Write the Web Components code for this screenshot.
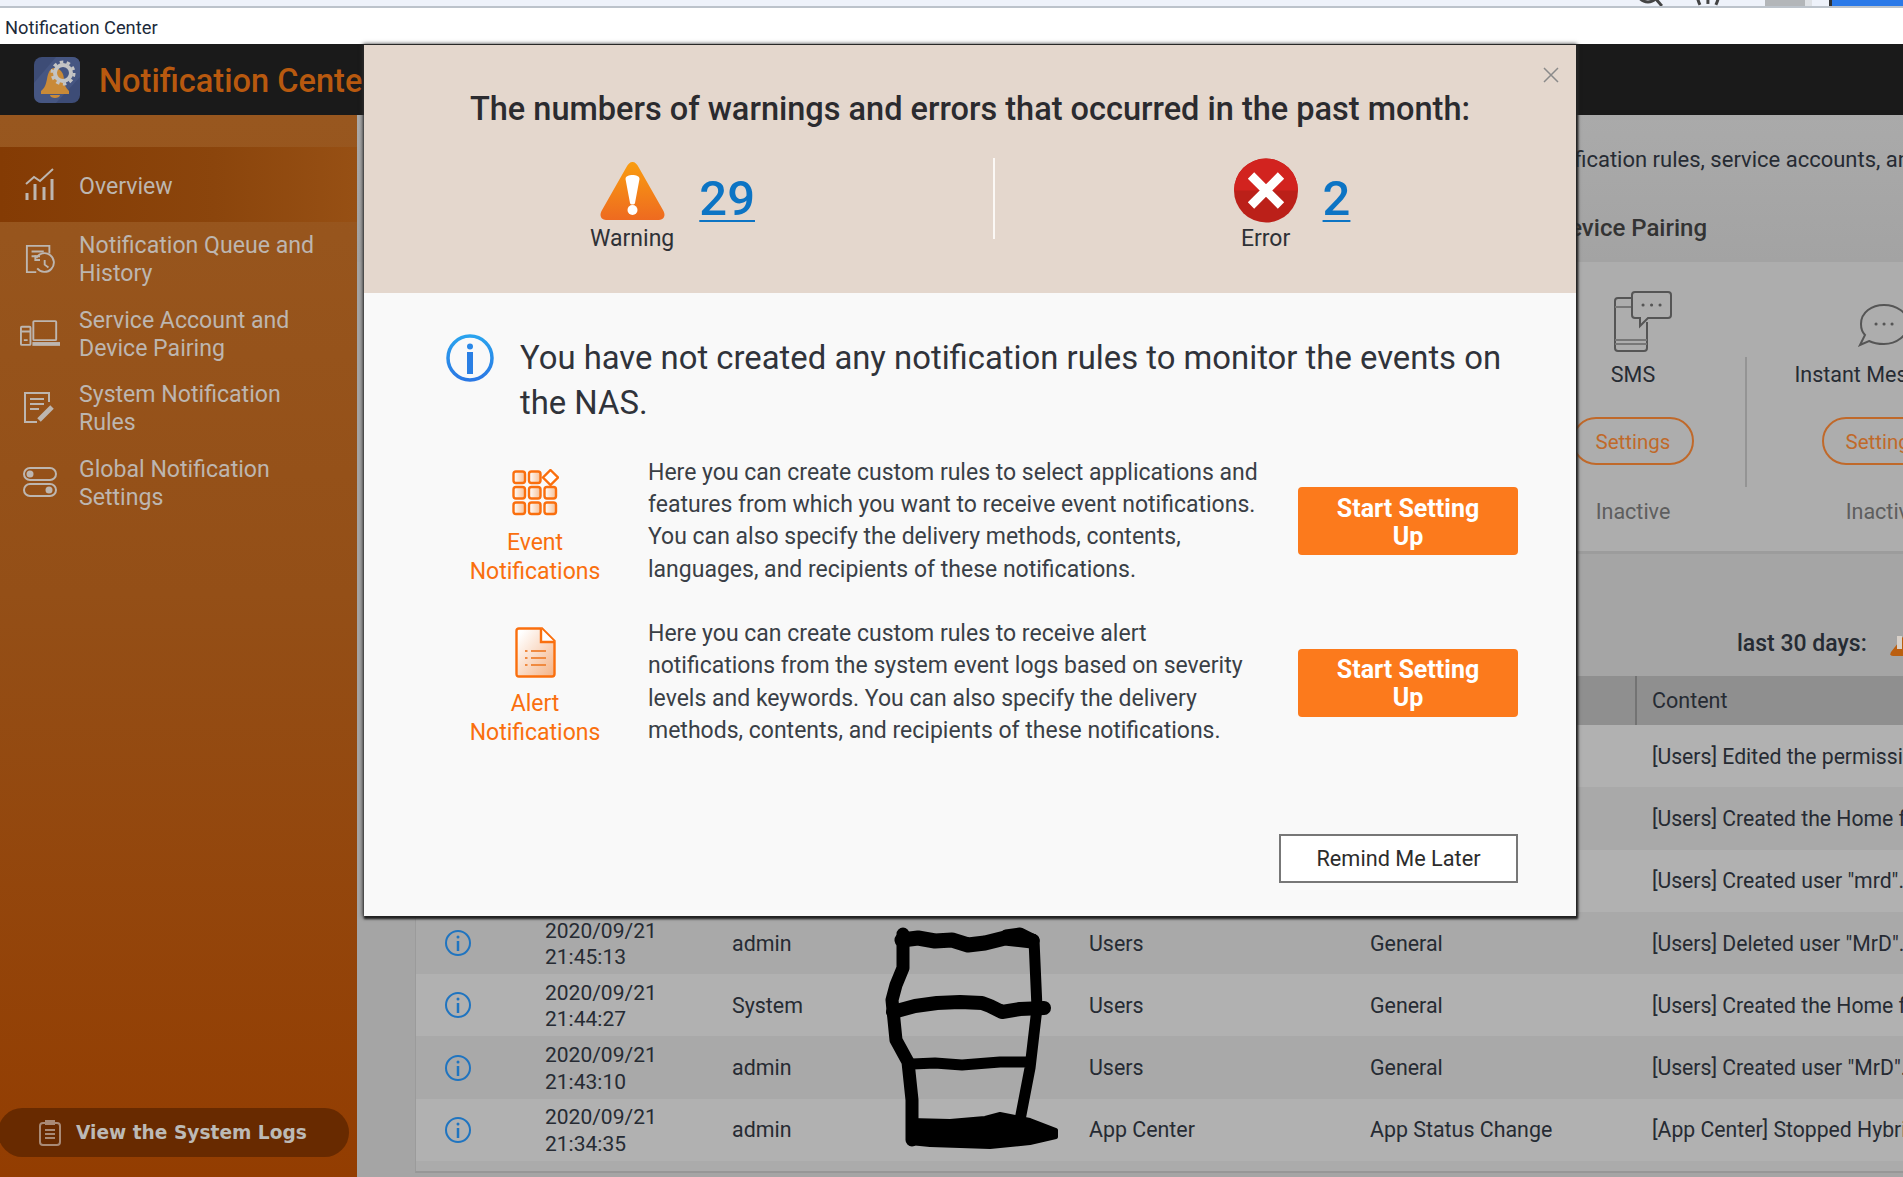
<!DOCTYPE html>
<html lang="en">
<head>
<meta charset="utf-8">
<title>Notification Center</title>
<style>
  html, body { margin: 0; height: 100%; overflow: hidden; background: #a5a5a5; }
  body { width: 1903px; height: 1177px; position: relative; font-family: Roboto, "Liberation Sans", sans-serif; display: flex; flex-direction: column; }
  svg { display: block; }
</style>
</head>
<body>
<qts-chrome></qts-chrome>
<qts-titlebar>Notification Center</qts-titlebar>
<nc-header>Notification Center</nc-header>
<nc-layout>
  <nc-sidebar slot="side">
    <nc-nav-item active>
      <svg slot="icon" width="30" height="33" viewBox="0 0 30 33" fill="none" stroke="currentColor" stroke-width="2"><path d="M1 16 L9 9 L15 13 L28 1"/><path stroke-width="3" d="M2 32V25M10 32V16M19 32V19M27 32V11"/></svg>
      Overview
    </nc-nav-item>
    <nc-nav-item>
      <svg slot="icon" width="30" height="30" viewBox="0 0 32 32" fill="none" stroke="currentColor" stroke-width="2"><path d="M12 30H2V2H26V10"/><path d="M7 8H20M7 13H16"/><path d="M12 15a10 10 0 1 1 1 11"/><path d="M11 12V17H16"/><path d="M21 17V22L25 25"/></svg>
      Notification Queue and History
    </nc-nav-item>
    <nc-nav-item>
      <svg slot="icon" width="40" height="26" viewBox="0 0 42 27" fill="none" stroke="currentColor" stroke-width="2"><rect x="14" y="1" width="24" height="20" rx="1"/><path stroke-width="4" d="M13 25H42"/><rect x="1" y="7" width="10" height="19" rx="1"/><path d="M1 12H11M4 21H8"/></svg>
      Service Account and Device Pairing
    </nc-nav-item>
    <nc-nav-item>
      <svg slot="icon" width="31" height="32" viewBox="0 0 31 32" fill="none" stroke="currentColor" stroke-width="2"><path d="M13 30H1V1H25V10"/><path d="M6 7H20M6 12H20M6 17H15"/><path stroke-width="5" d="M15 28L28 15"/></svg>
      System Notification Rules
    </nc-nav-item>
    <nc-nav-item>
      <svg slot="icon" width="34" height="31" viewBox="0 0 34 31" fill="none" stroke="currentColor" stroke-width="2"><rect x="1" y="1" width="32" height="12" rx="6"/><rect x="1" y="17" width="32" height="12" rx="6"/><circle cx="7" cy="7" r="3.5" fill="currentColor" stroke="none"/><circle cx="26" cy="23" r="3.5" fill="currentColor" stroke="none"/></svg>
      Global Notification Settings
    </nc-nav-item>
    <nc-logs-button>View the System Logs</nc-logs-button>
  </nc-sidebar>
  <nc-main slot="main">
    <span slot="intro">notification rules, service accounts, and device pairing</span>
    <span slot="heading">Service Account and Device Pairing</span>
    <nc-channel slot="channels" label="SMS" col="224px">
      <svg style="margin-left:19px" width="58" height="61" viewBox="0 0 58 61" fill="none" stroke="#555" stroke-width="2"><path d="M17 7H4Q1 7 1 10V57Q1 60 4 60H30Q33 60 33 57V31"/><path d="M1 16H17M1 49H33M1 53H33" stroke="#777"/><path d="M21 1H54Q57 1 57 4V24Q57 27 54 27H34L26 35V27H21Q18 27 18 24V4Q18 1 21 1Z"/><path stroke-width="3" stroke-linecap="round" d="M29 14h.1M37.500 14h.1M46 14h.1"/></svg>
    </nc-channel>
    <nc-channel slot="channels" label="Instant Messaging" col="276px" divided>
      <svg style="margin-bottom:5px" width="52" height="44" viewBox="0 0 52 44" fill="none" stroke="#555" stroke-width="2"><path d="M26 2C38 2 50 9 50 21C50 33 38 41 26 41C20 41 15 40 11 38L2 42L7 32C4 29 3 25 3 21C3 9 14 2 26 2Z"/><path stroke-width="3" stroke-linecap="round" d="M18 21h.1M26 21h.1M34 21h.1"/></svg>
    </nc-channel>
    <span slot="summary">last 30 days:</span>
    <nc-log-table slot="table">
      <nc-log-row content="[Users] Edited the permission"></nc-log-row>
      <nc-log-row content="[Users] Created the Home folder"></nc-log-row>
      <nc-log-row content='[Users] Created user "mrd".'></nc-log-row>
      <nc-log-row date="2020/09/21" time="21:45:13" user="admin" app="Users" category="General" content='[Users] Deleted user "MrD".'></nc-log-row>
      <nc-log-row date="2020/09/21" time="21:44:27" user="System" app="Users" category="General" content="[Users] Created the Home folder"></nc-log-row>
      <nc-log-row date="2020/09/21" time="21:43:10" user="admin" app="Users" category="General" content='[Users] Created user "MrD".'></nc-log-row>
      <nc-log-row date="2020/09/21" time="21:34:35" user="admin" app="App Center" category="App Status Change" content="[App Center] Stopped Hybrid"></nc-log-row>
    </nc-log-table>
  </nc-main>
</nc-layout>
<nc-scribble></nc-scribble>
<nc-modal>
  <span slot="title">The numbers of warnings and errors that occurred in the past month:</span>
  <nc-stat slot="warning" label="Warning" count="29" gap="25px">
    <svg style="margin-bottom:3px" width="65" height="58" viewBox="0 0 65 58"><defs><linearGradient id="w" x1="0" y1="0" x2="0" y2="1"><stop offset="0" stop-color="#f99d10"/><stop offset="1" stop-color="#ee6a20"/></linearGradient></defs><path fill="url(#w)" d="M32.500 0C35 0 37 2 38.500 5L63.500 49C66 54 63.500 58 59 58H6C1.500 58 -1 54 1.500 49L26.500 5C28 2 30 0 32.500 0Z"/><path fill="#fff" d="M25.500 17C25.500 14 29 13 32.500 13C36 13 39.500 14 39.500 17L35 41C34.500 43 30.500 43 30 41Z"/><circle cx="32.500" cy="48" r="5" fill="#fff"/></svg>
  </nc-stat>
  <nc-stat slot="error" label="Error" count="2" gap="25px">
    <svg width="64" height="65" viewBox="0 0 64 65"><circle cx="32" cy="32.500" r="32" fill="#bb2019"/><path fill="#d2231f" d="M0 32.500a32 32 0 0 1 64 0Z"/><path stroke="#fff" stroke-width="9" d="M17 17.500L47 47.500M47 17.500L17 47.500"/></svg>
  </nc-stat>
  <svg slot="info" style="margin-top:-2px" width="48" height="48" viewBox="0 0 48 48"><defs><linearGradient id="i" x1="0" y1="0" x2="0" y2="1"><stop offset="0" stop-color="#2aa3ee"/><stop offset="1" stop-color="#2a78e4"/></linearGradient></defs><circle cx="24" cy="24" r="22" fill="none" stroke="url(#i)" stroke-width="3.500"/><circle cx="24" cy="12.500" r="3" fill="#2a88e8"/><rect x="21" y="18" width="6" height="22" fill="#2a7fe4"/></svg>
  <span slot="message">You have not created any notification rules to monitor the events on the NAS.</span>
  <nc-setup-row slot="rows" label="Event Notifications">
    <svg slot="icon" width="47" height="47" viewBox="0 0 47 47"><defs><linearGradient id="c" x1="0" y1="0" x2="1" y2="0"><stop offset="0" stop-color="#fff"/><stop offset="1" stop-color="#f6bf94"/></linearGradient></defs><g fill="url(#c)" stroke="#fa6f0e" stroke-width="2.400"><rect x="1.500" y="2.500" width="11.500" height="11.500" rx="2.500"/><rect x="17" y="2.500" width="11.500" height="11.500" rx="2.500"/><path d="M38.500 1L46 8.500L38.500 16L31 8.500Z" fill="#fff"/><rect x="1.500" y="18" width="11.500" height="11.500" rx="2.500"/><rect x="17" y="18" width="11.500" height="11.500" rx="2.500"/><rect x="32.500" y="18" width="11.500" height="11.500" rx="2.500"/><rect x="1.500" y="33.500" width="11.500" height="11.500" rx="2.500"/><rect x="17" y="33.500" width="11.500" height="11.500" rx="2.500"/><rect x="32.500" y="33.500" width="11.500" height="11.500" rx="2.500"/></g></svg>
    Here you can create custom rules to select applications and features from which you want to receive event notifications. You can also specify the delivery methods, contents, languages, and recipients of these notifications.
  </nc-setup-row>
  <nc-setup-row slot="rows" label="Alert Notifications">
    <svg slot="icon" style="margin:-3px 0 -1px" width="41" height="51" viewBox="0 0 41 51"><defs><linearGradient id="d" x1="0" y1="0" x2="1" y2="1"><stop offset="0.100" stop-color="#fff"/><stop offset="1" stop-color="#f4b285"/></linearGradient></defs><path fill="url(#d)" stroke="#fa6f0e" stroke-width="2.400" d="M4 1.500H27L39.500 14V47Q39.500 49.500 37 49.500H4Q1.500 49.500 1.500 47V4Q1.500 1.500 4 1.500Z"/><path fill="#fff" stroke="#fa6f0e" stroke-width="2.400" d="M26 1.500V15H39.500"/><path stroke="#f08a40" stroke-width="2" d="M10 24h2.500M16 24H31M10 31h2.500M16 31H31M10 38h2.500M16 38H31"/></svg>
    Here you can create custom rules to receive alert notifications from the system event logs based on severity levels and keywords. You can also specify the delivery methods, contents, and recipients of these notifications.
  </nc-setup-row>
</nc-modal>

<script>
class QtsChrome extends HTMLElement {
  constructor() {
    super();
    this.attachShadow({ mode: "open" });
  }

  connectedCallback() {
    this.shadowRoot.innerHTML = /* html */`
    <style>
      :host {
        display: flex;
        height: 6px;
        background: #eef2fa;
        border-bottom: 2px solid #bcc3cb;
        flex: none;
        overflow: hidden;
      }
      svg { display: block; margin-top: -22px; }
      .search { margin-left: 1635px; }
      .help { margin-left: 29px; }
      .avatar { width: 41px; background: #b3b6b9; margin-left: 41px; }
      .edge { width: 7px; background: #dfe2e6; }
      .account { width: 71px; background: #2a79e8; border-left: 3px solid #333; margin-left: 17px; }
    </style>
    <svg class="search" width="28" height="30" viewBox="0 0 28 30" fill="none" stroke="#444" stroke-width="3"><circle cx="13" cy="13" r="11"/><path d="M21 21L27 28"/></svg>
    <svg class="help" width="32" height="30" viewBox="0 0 32 30" fill="none" stroke="#444" stroke-width="3"><path d="M6 1Q2 14 8 27M26 1Q30 14 24 27"/><path d="M16 22v4"/></svg>
    <div class="avatar"></div>
    <div class="edge"></div>
    <div class="account"></div>`;
  }
}

class QtsTitlebar extends HTMLElement {
  constructor() {
    super();
    this.attachShadow({ mode: "open" });
  }

  connectedCallback() {
    this.shadowRoot.innerHTML = /* html */`
    <style>
      :host {
        display: flex;
        align-items: center;
        flex: none;
        height: 34px;
        padding: 2px 0 0 5px;
        background: #fff;
        color: #1c2a3a;
        font-size: 18.300px;
      }
    </style>
    <slot></slot>`;
  }
}

class NcHeader extends HTMLElement {
  constructor() {
    super();
    this.attachShadow({ mode: "open" });
  }

  connectedCallback() {
    this.shadowRoot.innerHTML = /* html */`
    <style>
      :host {
        display: flex;
        align-items: center;
        flex: none;
        height: 71px;
        box-sizing: border-box;
        padding-left: 34px;
        gap: 19px;
        background: #1a1a1a;
        color: #b8590f;
        font-size: 32.600px;
        font-weight: 500;
        white-space: nowrap;
      }
      span { margin-top: 2px; }
    </style>
    <svg width="46" height="46" viewBox="0 0 46 46">
      <rect width="46" height="46" rx="8" fill="#3d4c76"/>
      <path d="M0 26L22 0H38Q46 0 46 8V20L22 46H8Q0 46 0 38Z" fill="#465682"/>
      <path fill="#c98a38" d="M20 11C27 11 30 17 30 23C30 28 32 31 35 34L35 37H7L7 34C11 31 12 27 13 22C14 16 16 11 20 11Z"/>
      <path fill="#c98a38" d="M16 38H26C26 42 16 42 16 38Z"/>
      <circle cx="29" cy="16" r="8" fill="none" stroke="#c4c4c4" stroke-width="4"/>
      <circle cx="29" cy="16" r="11" fill="none" stroke="#c4c4c4" stroke-width="3" stroke-dasharray="3.500 3.400"/>
    </svg>
    <span><slot></slot></span>`;
  }
}

class NcLayout extends HTMLElement {
  constructor() {
    super();
    this.attachShadow({ mode: "open" });
  }

  connectedCallback() {
    this.shadowRoot.innerHTML = /* html */`
    <style>
      :host {
        display: flex;
        flex: 1;
        min-height: 0;
      }
      ::slotted([slot="side"]) { flex: none; }
      ::slotted([slot="main"]) { flex: 1; min-width: 0; }
    </style>
    <slot name="side"></slot>
    <slot name="main"></slot>`;
  }
}

class NcSidebar extends HTMLElement {
  constructor() {
    super();
    this.attachShadow({ mode: "open" });
  }

  connectedCallback() {
    this.shadowRoot.innerHTML = /* html */`
    <style>
      :host {
        display: flex;
        flex-direction: column;
        width: 357px;
        box-sizing: border-box;
        padding: 32px 0 20px;
        background: linear-gradient(#98571f, #944f17 45%, #933d01);
        color: #bdb6b0;
        overflow: hidden;
      }
    </style>
    <slot></slot>`;
  }
}

class NcNavItem extends HTMLElement {
  constructor() {
    super();
    this.attachShadow({ mode: "open" });
  }

  connectedCallback() {
    this.shadowRoot.innerHTML = /* html */`
    <style>
      :host {
        display: flex;
        align-items: center;
        height: 74.5px;
        font-size: 23.100px;
        line-height: 28px;
      }
      :host([active]) {
        background: linear-gradient(90deg, #843b04, #8b450c 60%, #975014);
      }
      .icon {
        width: 79px;
        flex: none;
        display: flex;
        justify-content: center;
        box-sizing: border-box;
      }
      .label { width: 262px; margin-top: 3px; }
      :host([active]) .label { margin-top: 5px; }
    </style>
    <div class="icon"><slot name="icon"></slot></div>
    <div class="label"><slot></slot></div>`;
  }
}

class NcLogsButton extends HTMLElement {
  constructor() {
    super();
    this.attachShadow({ mode: "open" });
  }

  connectedCallback() {
    this.shadowRoot.innerHTML = /* html */`
    <style>
      :host {
        display: flex;
        align-items: center;
        gap: 15px;
        margin-top: auto;
        margin-left: -2px;
        width: 351px;
        height: 49px;
        box-sizing: border-box;
        padding-left: 41px;
        border-radius: 25px;
        background: #682a00;
        color: #bcbab6;
        font-family: "DejaVu Sans", sans-serif;
        font-size: 18.600px;
        font-weight: 700;
        white-space: nowrap;
      }
    </style>
    <svg width="22" height="27" viewBox="0 0 22 27" fill="none" stroke="#a98a76" stroke-width="2"><rect x="1" y="4" width="20" height="22" rx="3"/><path d="M7 5V2H15V5Z"/><path d="M6 11H16M6 15H16M6 19H16"/></svg>
    <span><slot></slot></span>`;
  }
}

class NcMain extends HTMLElement {
  constructor() {
    super();
    this.attachShadow({ mode: "open" });
  }

  connectedCallback() {
    this.shadowRoot.innerHTML = /* html */`
    <style>
      :host {
        display: block;
        box-sizing: border-box;
        padding: 30px 0 0 58px;
        background: linear-gradient(#aaa, #a3a3a3 147px, #a5a5a5 147px);
        color: #262b33;
        white-space: nowrap;
        overflow: hidden;
      }
      .intro {
        margin-left: 1122px;
        font-size: 22px;
        line-height: 30px;
      }
      .heading {
        margin: 38px 0 19px 912px;
        font-size: 24px;
        font-weight: 500;
        line-height: 30px;
        color: #333;
      }
      .card {
        display: flex;
        height: 292px;
        padding-left: 1106px;
        box-sizing: border-box;
        background: #adadad;
        border-bottom: 3px solid #9c9c9c;
      }
      .summary {
        display: flex;
        align-items: center;
        gap: 22px;
        margin: 75px 0 17px 1322px;
        font-size: 23px;
        font-weight: 500;
        line-height: 30px;
      }
      .summary svg { flex: none; margin-top: -4px; }
    </style>
    <div class="intro"><slot name="intro"></slot></div>
    <div class="heading"><slot name="heading"></slot></div>
    <div class="card"><slot name="channels"></slot></div>
    <div class="summary">
      <slot name="summary"></slot>
      <svg width="42" height="28" viewBox="0 0 42 28"><path fill="#bb5f10" d="M21 0L40 24Q42 28 38 28H4Q0 28 2 24Z"/><rect x="8" y="8" width="5" height="13" fill="#d8d0c8"/></svg>
    </div>
    <slot name="table"></slot>`;
  }
}

class NcChannel extends HTMLElement {
  constructor() {
    super();
    this.attachShadow({ mode: "open" });
  }

  connectedCallback() {
    this.shadowRoot.innerHTML = /* html */`
    <style>
      :host {
        display: flex;
        flex-direction: column;
        align-items: center;
        flex: none;
        box-sizing: border-box;
        width: ${this.getAttribute("col")};
        padding-top: 29px;
        position: relative;
      }
      :host([divided])::before {
        content: "";
        position: absolute;
        left: 0;
        top: 95px;
        height: 130px;
        width: 2px;
        background: #949494;
      }
      .icon { height: 61px; display: flex; align-items: flex-end; margin-left: 1px; }
      .label { margin-top: 10px; font-size: 21.500px; line-height: 26px; color: #262b33; }
      button {
        all: unset;
        box-sizing: border-box;
        width: 122px;
        height: 48px;
        margin-top: 29px;
        padding-top: 1px;
        border: 2px solid #c0692a;
        border-radius: 24px;
        color: #c0692a;
        font-size: 20.500px;
        text-align: center;
      }
      .state { margin-top: 32px; font-size: 21.500px; line-height: 30px; color: #5e5e5e; }
    </style>
    <div class="icon"><slot></slot></div>
    <div class="label">${this.getAttribute("label")}</div>
    <button>Settings</button>
    <div class="state">Inactive</div>`;
  }
}

class NcLogTable extends HTMLElement {
  constructor() {
    super();
    this.attachShadow({ mode: "open" });
  }

  connectedCallback() {
    this.shadowRoot.innerHTML = /* html */`
    <style>
      :host {
        display: block;
        height: 497px;
        box-sizing: border-box;
        border-left: 1px solid #9b9b9b;
        border-bottom: 2px solid #979797;
        background: #ababab;
        --cols: 129px 187px 357px 281px 265px 1fr;
      }
      .head {
        display: grid;
        grid-template-columns: var(--cols);
        height: 49px;
        align-items: stretch;
        background: #8f8f8f;
        font-size: 21.500px;
        color: #262b33;
      }
      .content {
        grid-column: 6;
        display: flex;
        align-items: center;
        padding-left: 15px;
        border-left: 2px solid #737373;
      }
    </style>
    <div class="head"><div class="content">Content</div></div>
    <slot></slot>`;
  }
}

class NcLogRow extends HTMLElement {
  constructor() {
    super();
    this.attachShadow({ mode: "open" });
  }

  connectedCallback() {
    const attr = (name) => this.getAttribute(name) || "";
    const date = attr("date");
    this.shadowRoot.innerHTML = /* html */`
    <style>
      :host {
        display: grid;
        grid-template-columns: var(--cols);
        align-items: center;
        height: 62.300px;
        font-size: 21.400px;
        color: #262b33;
        white-space: nowrap;
      }
      :host(:nth-child(odd)) { background: #b1b1b1; }
      :host(:nth-child(even)) { background: #a9a9a9; }
      .icon { padding-left: 29px; }
      .date { font-size: 21px; line-height: 26.500px; margin-top: 2px; }
      .content { padding-left: 17px; font-size: 21.200px; }
    </style>
    <div class="icon">${date ? /* html */`
      <svg width="26" height="26" viewBox="0 0 26 26" fill="none" stroke="#1f74c0" stroke-width="2" style="display:block"><circle cx="13" cy="13" r="12"/><path d="M13 11V21" stroke-width="2.500"/><circle cx="13" cy="7" r="1.500" fill="#1f74c0" stroke="none"/></svg>` : ""}
    </div>
    <div class="date">${date}<br>${attr("time")}</div>
    <div>${attr("user")}</div>
    <div>${attr("app")}</div>
    <div>${attr("category")}</div>
    <div class="content">${attr("content")}</div>`;
  }
}

class NcScribble extends HTMLElement {
  constructor() {
    super();
    this.attachShadow({ mode: "open" });
  }

  connectedCallback() {
    // marker strokes over the redacted column, drawn in page coordinates
    this.shadowRoot.innerHTML = /* html */`
    <style>
      :host { position: absolute; left: 0; top: 0; pointer-events: none; }
      svg { display: block; }
    </style>
    <svg width="1903" height="1177" viewBox="0 0 1903 1177" fill="none" stroke="#000" stroke-linecap="round" stroke-linejoin="round">
      <path stroke-width="15" d="M902 940L918 938L935 941L952 940L968 945L985 943L1005 938L1032 941"/>
      <path stroke-width="11" d="M1006 935L1020 933L1034 940"/>
      <path stroke-width="13" d="M903 934L903 968L896 985L892 1000L896 1040L908 1062L912 1100L912 1140"/>
      <path stroke-width="11" d="M1034 940L1037 1008L1030 1068L1020 1120"/>
      <path stroke-width="14" d="M893 1012L915 1006L937 1003L960 1002L982 1003L990 1006L1002 1012L1020 1009L1044 1008"/>
      <path stroke-width="11" d="M912 1064L935 1063L962 1065L1000 1062L1029 1062"/>
      <path stroke-width="4" fill="#000" d="M910 1120L950 1121L985 1118L1000 1114L1030 1120L1056 1130L1056 1137L1030 1143L990 1147L930 1145L910 1143Z"/>
    </svg>`;
  }
}

class NcModal extends HTMLElement {
  constructor() {
    super();
    this.attachShadow({ mode: "open" });
  }

  connectedCallback() {
    this.shadowRoot.innerHTML = /* html */`
    <style>
      :host {
        position: absolute;
        left: 364px;
        top: 45px;
        width: 1212px;
        height: 871px;
        display: flex;
        flex-direction: column;
        background: #f9f9f9;
        box-shadow: 1px 2px 2px 1px #222, 0 0 4px 1px #333;
        color: #2f3136;
      }
      .head {
        position: relative;
        height: 248px;
        flex: none;
        box-sizing: border-box;
        padding-top: 44px;
        background: #e4d7cd;
      }
      .title {
        margin: 0;
        text-align: center;
        font-size: 32.500px;
        font-weight: 500;
        line-height: 40px;
        color: #2b2b2f;
      }
      .close {
        position: absolute;
        right: 17px;
        top: 22px;
        display: block;
      }
      .stats {
        display: grid;
        grid-template-columns: 629px 2px 1fr;
        grid-template-rows: 81px;
        margin-top: 29px;
        height: 81px;
      }
      .stats .left, .stats .right { display: flex; justify-content: center; }
      .stats .left { padding-right: 12px; }
      .stats .right { padding-left: 13px; }
      .divider { background: #fbf8f5; }
      .body { flex: 1; display: flex; flex-direction: column; padding-top: 42.500px; min-height: 0; }
      .notice {
        display: flex;
        gap: 26px;
        padding-left: 82px;
        width: 1066px;
        font-size: 32.850px;
        line-height: 45px;
        color: #30333a;
      }
      ::slotted([slot="info"]) { flex: none; }
      .rows { display: flex; flex-direction: column; gap: 32.500px; margin-top: 31px; }
      .foot { margin-top: auto; display: flex; justify-content: flex-end; padding: 0 58px 33px 0; }
      button {
        all: unset;
        box-sizing: border-box;
        width: 239px;
        height: 49px;
        border: 2px solid #777;
        background: #fff;
        color: #2c2c2c;
        font-size: 21.700px;
        text-align: center;
      }
    </style>
    <div class="head">
      <h2 class="title"><slot name="title"></slot></h2>
      <svg class="close" width="16" height="16" viewBox="0 0 16 16" stroke="#8a8a8a" stroke-width="1.500"><path d="M1 1L15 15M15 1L1 15"/></svg>
      <div class="stats">
        <div class="left"><slot name="warning"></slot></div>
        <div class="divider"></div>
        <div class="right"><slot name="error"></slot></div>
      </div>
    </div>
    <div class="body">
      <div class="notice"><slot name="info"></slot><div><slot name="message"></slot></div></div>
      <div class="rows"><slot name="rows"></slot></div>
      <div class="foot"><button>Remind Me Later</button></div>
    </div>`;
  }
}

class NcStat extends HTMLElement {
  constructor() {
    super();
    this.attachShadow({ mode: "open" });
  }

  connectedCallback() {
    this.shadowRoot.innerHTML = /* html */`
    <style>
      :host {
        display: flex;
        gap: ${this.getAttribute("gap")};
        height: 81px;
      }
      .badge { display: flex; flex-direction: column; align-items: center; }
      .icon { flex: none; height: 65px; display: flex; align-items: flex-end; }
      .label { flex: none; margin-top: 1px; font-size: 23px; line-height: 30px; color: #2f3136; }
      a {
        display: block;
        margin-top: 13px;
        font-size: 49px;
        font-weight: 500;
        line-height: 55px;
        color: #0c74c4;
        text-decoration: underline;
        text-decoration-thickness: 2px;
        text-underline-offset: 5px;
      }
    </style>
    <div class="badge">
      <div class="icon"><slot></slot></div>
      <div class="label">${this.getAttribute("label")}</div>
    </div>
    <a>${this.getAttribute("count")}</a>`;
  }
}

class NcSetupRow extends HTMLElement {
  constructor() {
    super();
    this.attachShadow({ mode: "open" });
  }

  connectedCallback() {
    this.shadowRoot.innerHTML = /* html */`
    <style>
      :host {
        display: grid;
        grid-template-columns: 210px 658px 220px;
        align-items: center;
        padding-left: 66px;
        height: 129px;
      }
      .feature {
        display: flex;
        flex-direction: column;
        align-items: center;
        align-self: start;
        padding-top: 12px;
        color: #fa6f0e;
        font-size: 23px;
        line-height: 29px;
        text-align: center;
        gap: 12px;
      }
      .feature div { max-width: 140px; }
      .text {
        margin-left: 8px;
        width: 615px;
        font-size: 23px;
        line-height: 32.400px;
        color: #3a3f46;
      }
      button {
        all: unset;
        box-sizing: border-box;
        width: 220px;
        height: 68px;
        padding: 3px 30px 0;
        border-radius: 4px;
        background: #fc7a1c;
        color: #fff;
        font-size: 25px;
        font-weight: 700;
        line-height: 28px;
        text-align: center;
      }
    </style>
    <div class="feature">
      <slot name="icon"></slot>
      <div>${this.getAttribute("label")}</div>
    </div>
    <div class="text"><slot></slot></div>
    <button>Start Setting Up</button>`;
  }
}

customElements.define("qts-chrome", QtsChrome);
customElements.define("qts-titlebar", QtsTitlebar);
customElements.define("nc-header", NcHeader);
customElements.define("nc-layout", NcLayout);
customElements.define("nc-sidebar", NcSidebar);
customElements.define("nc-nav-item", NcNavItem);
customElements.define("nc-logs-button", NcLogsButton);
customElements.define("nc-main", NcMain);
customElements.define("nc-channel", NcChannel);
customElements.define("nc-log-table", NcLogTable);
customElements.define("nc-log-row", NcLogRow);
customElements.define("nc-scribble", NcScribble);
customElements.define("nc-modal", NcModal);
customElements.define("nc-stat", NcStat);
customElements.define("nc-setup-row", NcSetupRow);
</script>
</body>
</html>
